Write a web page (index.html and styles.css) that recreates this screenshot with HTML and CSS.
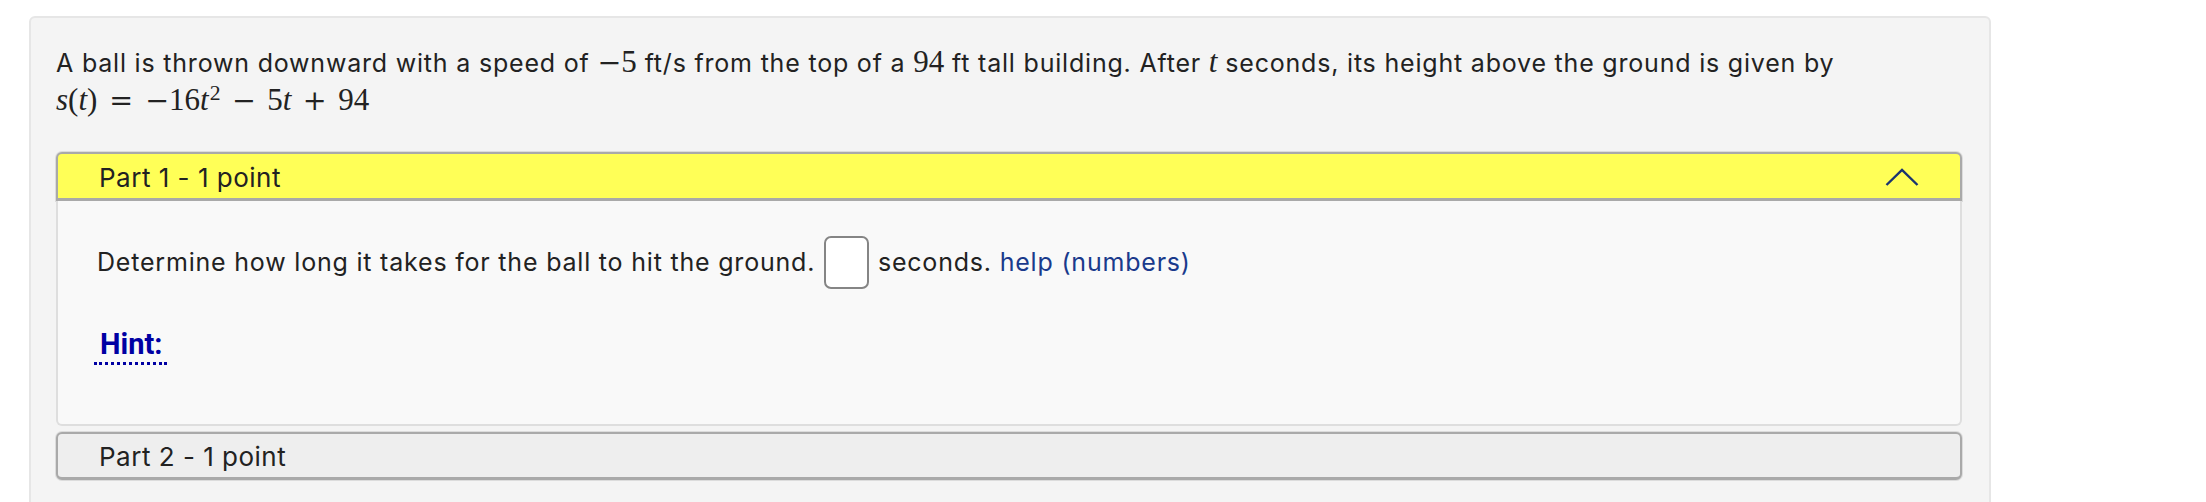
FILE: index.html
```html
<!DOCTYPE html>
<html>
<head>
<meta charset="utf-8">
<link rel="stylesheet" href="styles.css">
</head>
<body>
<div class="problem">
  <p class="stem">A ball is thrown downward with a speed of <span class="math"><span class="op">−</span>5</span> ft/s from the top of a <span class="math">94</span> ft tall building. After <span class="math"><i>t</i></span> seconds, its height above the ground is given by<br><span class="math"><i>s</i>(<i>t</i>)<span class="op rel">=</span><span class="op">−</span>16<i>t</i><sup>2</sup><span class="op bin">−</span>5<i>t</i><span class="op bin">+</span>94</span></p>

  <div class="part open">
    <div class="part-head">
      <span class="part-title">Part 1 - 1 point</span>
      <svg class="chev" width="34" height="20" viewBox="0 0 34 20"><path d="M1.5 18 L17 3 L32.5 18" fill="none" stroke="#1b3570" stroke-width="2.4"/></svg>
    </div>
    <div class="part-body">
      <p class="q">Determine how long it takes for the ball to hit the ground. <span class="ans"></span> seconds. <a class="help">help (numbers)</a></p>
      <div class="hint-row"><span class="hint">Hint:</span></div>
    </div>
  </div>

  <div class="part closed">
    <div class="part-head">
      <span class="part-title">Part 2 - 1 point</span>
    </div>
  </div>
</div>
</body>
</html>
```
FILE: styles.css
```css
html, body {
  margin: 0;
  padding: 0;
  background: #ffffff;
}
body {
  font-family: Inter, "Noto Sans", sans-serif;
  color: #222222;
}
.problem {
  margin: 16px 0 0 29px;
  width: 1962px;
  height: 520px;
  box-sizing: border-box;
  background: #f4f4f4;
  border: 2px solid #e6e6e6;
  border-radius: 6px;
  padding: 26px 27px 0 25px;
}
.stem {
  margin: 0;
  font-size: 25px;
  letter-spacing: 0.8px;
  line-height: 38px;
}
.math {
  font-family: "Liberation Serif", "DejaVu Serif", serif;
  font-size: 31px;
  letter-spacing: 0;
  line-height: 0;
}
.math i {
  font-style: italic;
}
.math sup {
  font-size: 0.7em;
  line-height: 0;
  vertical-align: 0.45em;
  margin-left: 1px;
}
.op {
  font-family: "DejaVu Serif", serif;
  font-size: 0.92em;
  font-weight: 300;
}
.rel {
  margin: 0 0.42em;
}
.bin {
  margin: 0 0.4em;
}
.open {
  margin-top: 32px;
}
.part-head {
  display: flex;
  align-items: center;
  justify-content: space-between;
  height: 49px;
  box-sizing: border-box;
  padding: 0 41px 0 41px;
  border: 2px solid #a9a9a9;
  border-bottom-width: 3px;
  border-radius: 6px 6px 0 0;
  box-shadow: 0 0 0 1px #dcdcdc;
  background: #ffff57;
  font-size: 26px;
  letter-spacing: 0.5px;
}
.part-title {
  padding-top: 2px;
}
.chev {
  display: block;
  margin-top: 1px;
}
.part-body {
  background: #f9f9f9;
  border: 2px solid #dedede;
  border-top: none;
  border-radius: 0 0 6px 6px;
  height: 225px;
  box-sizing: border-box;
  padding: 35px 38px 0 39px;
}
.q {
  margin: 0;
  font-size: 25px;
  letter-spacing: 0.8px;
  line-height: 53px;
  display: flex;
  align-items: center;
  white-space: pre;
}
.ans {
  display: inline-block;
  width: 45px;
  height: 53px;
  box-sizing: border-box;
  border: 2px solid #858585;
  border-radius: 7px;
  background: #ffffff;
  margin: 0 1px;
}
.help {
  color: #1a3a8c;
  text-decoration: none;
}
.hint-row {
  margin-top: 40px;
}
.hint {
  display: inline-block;
  font-family: Roboto, "Liberation Sans", sans-serif;
  font-weight: 700;
  font-size: 29px;
  color: #0000a3;
  line-height: 30px;
  padding: 0 5px 3px 6px;
  border-bottom: 3px dotted #0000a3;
  margin-left: -3px;
}
.closed {
  margin-top: 6px;
}
.closed .part-head {
  height: 48px;
  border-width: 2px;
  border-bottom-width: 3px;
  border-radius: 6px;
  background: #eeeeee;
}
```
